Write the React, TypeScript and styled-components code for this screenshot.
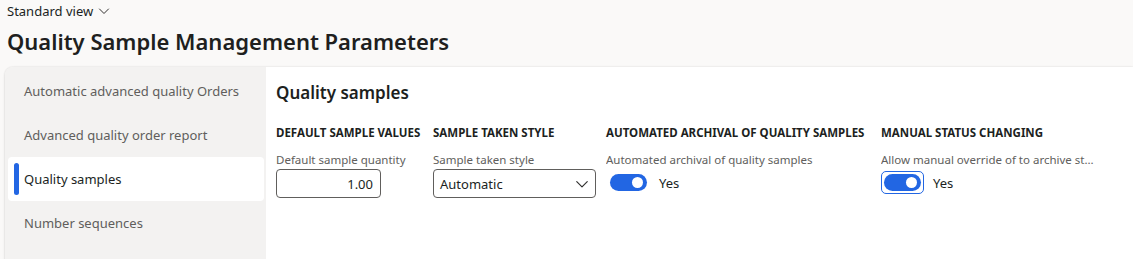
import React from "react";
import styled, { createGlobalStyle } from "styled-components";

const GlobalStyle = createGlobalStyle`
  html, body { margin: 0; padding: 0; }
  body {
    background: #faf9f8;
    font-family: "Segoe UI", "Noto Sans", "Open Sans", sans-serif;
    color: #201f1e;
    overflow: hidden;
    height: 259px;
  }
  * { box-sizing: border-box; }
`;

const Page = styled.div`
  display: flex;
  flex-direction: column;
  height: 259px;
`;

const Header = styled.header`
  padding: 1px 0 0 7px;
  display: flex;
  flex-direction: column;
`;

const ViewSwitcher = styled.div`
  display: flex;
  align-items: center;
  gap: 5px;
  font-size: 13px;
  height: 20px;
  color: #201f1e;
`;

const Title = styled.h1`
  margin: 4px 0 0 0;
  font-size: 22px;
  font-weight: 600;
  line-height: 32px;
  color: #201f1e;
`;

const Card = styled.div`
  margin: 10px 0 0 5px;
  flex: 1;
  display: grid;
  grid-template-columns: 261px 1fr;
  border-radius: 8px 0 0 0;
  overflow: hidden;
  box-shadow: 0 0 2px rgba(0, 0, 0, 0.12), 0 1px 3px rgba(0, 0, 0, 0.1);
  min-height: 200px;
`;

const Nav = styled.nav`
  background: #f3f2f1;
  padding: 2px 2px 0 3px;
  display: flex;
  flex-direction: column;
`;

const NavItem = styled.div<{ $active?: boolean }>`
  position: relative;
  height: 44px;
  display: flex;
  align-items: center;
  padding-left: 16px;
  font-size: 13px;
  border-radius: 4px;
  color: ${(p) => (p.$active ? "#201f1e" : "#605e5c")};
  background: ${(p) => (p.$active ? "#ffffff" : "transparent")};
`;

const Indicator = styled.span`
  position: absolute;
  left: 6px;
  top: 6px;
  bottom: 6px;
  width: 5px;
  border-radius: 3px;
  background: #2266e3;
`;

const Content = styled.section`
  background: #ffffff;
  padding: 14px 0 0 10px;
`;

const SectionTitle = styled.h2`
  margin: 0;
  font-size: 17px;
  font-weight: 600;
  line-height: 24px;
  color: #201f1e;
`;

const Groups = styled.div`
  display: flex;
  gap: 10px;
  margin-top: 20px;
`;

const Group = styled.div<{ $w: number }>`
  width: ${(p) => p.$w}px;
  display: flex;
  flex-direction: column;
`;

const GroupTitle = styled.div`
  font-size: 11.5px;
  font-weight: 700;
  line-height: 16px;
  color: #201f1e;
  white-space: nowrap;
  text-transform: uppercase;
`;

const FieldLabel = styled.div`
  margin-top: 11px;
  font-size: 11.5px;
  line-height: 16px;
  color: #605e5c;
  white-space: nowrap;
  overflow: hidden;
  text-overflow: ellipsis;
`;

const NumberInput = styled.div`
  margin-top: 1px;
  width: 105px;
  height: 29px;
  border: 1px solid #605e5c;
  border-radius: 4px;
  display: flex;
  align-items: center;
  justify-content: flex-end;
  padding-right: 7px;
  font-size: 13px;
  color: #201f1e;
`;

const SelectBox = styled.div`
  margin-top: 1px;
  width: 163px;
  height: 29px;
  border: 1px solid #605e5c;
  border-radius: 4px;
  display: flex;
  align-items: center;
  justify-content: space-between;
  padding: 0 6px 0 6px;
  font-size: 13px;
  color: #201f1e;
`;

const ToggleRow = styled.div`
  margin-top: 2px;
  display: flex;
  align-items: center;
  gap: 9px;
  font-size: 13px;
  color: #201f1e;
  height: 25px;
`;

const ToggleWrap = styled.div<{ $focused?: boolean }>`
  display: flex;
  align-items: center;
  padding: 2px;
  margin-left: ${(p) => (p.$focused ? "0" : "1px")};
  border-radius: 5px;
  border: 1px solid ${(p) => (p.$focused ? "#2266e3" : "transparent")};
`;

const Toggle = styled.div`
  width: 37px;
  height: 17px;
  border-radius: 9px;
  background: #2266e3;
  display: flex;
  align-items: center;
  justify-content: flex-end;
  padding-right: 4px;
`;

const Knob = styled.span`
  width: 11px;
  height: 11px;
  border-radius: 50%;
  background: #ffffff;
`;

const Chevron = ({ size = 12 }: { size?: number }) => (
  <svg width={size} height={size} viewBox="0 0 12 12" fill="none">
    <path d="M1.5 4 L6 8.5 L10.5 4" stroke="#323130" strokeWidth="1" strokeLinecap="round" strokeLinejoin="round" />
  </svg>
);

const navItems = [
  "Automatic advanced quality Orders",
  "Advanced quality order report",
  "Quality samples",
  "Number sequences",
];

export default function App() {
  return (
    <>
      <GlobalStyle />
      <Page>
        <Header>
          <ViewSwitcher>
            Standard view <Chevron />
          </ViewSwitcher>
          <Title>Quality Sample Management Parameters</Title>
        </Header>
        <Card>
          <Nav>
            {navItems.map((item) => (
              <NavItem key={item} $active={item === "Quality samples"}>
                {item === "Quality samples" && <Indicator />}
                {item}
              </NavItem>
            ))}
          </Nav>
          <Content>
            <SectionTitle>Quality samples</SectionTitle>
            <Groups>
              <Group $w={147}>
                <GroupTitle>Default sample values</GroupTitle>
                <FieldLabel>Default sample quantity</FieldLabel>
                <NumberInput>1.00</NumberInput>
              </Group>
              <Group $w={163}>
                <GroupTitle>Sample taken style</GroupTitle>
                <FieldLabel>Sample taken style</FieldLabel>
                <SelectBox>
                  Automatic
                  <Chevron size={14} />
                </SelectBox>
              </Group>
              <Group $w={265}>
                <GroupTitle>Automated archival of quality samples</GroupTitle>
                <FieldLabel>Automated archival of quality samples</FieldLabel>
                <ToggleRow>
                  <ToggleWrap>
                    <Toggle>
                      <Knob />
                    </Toggle>
                  </ToggleWrap>
                  Yes
                </ToggleRow>
              </Group>
              <Group $w={218}>
                <GroupTitle>Manual status changing</GroupTitle>
                <FieldLabel>Allow manual override of to archive status</FieldLabel>
                <ToggleRow>
                  <ToggleWrap $focused>
                    <Toggle>
                      <Knob />
                    </Toggle>
                  </ToggleWrap>
                  Yes
                </ToggleRow>
              </Group>
            </Groups>
          </Content>
        </Card>
      </Page>
    </>
  );
}
